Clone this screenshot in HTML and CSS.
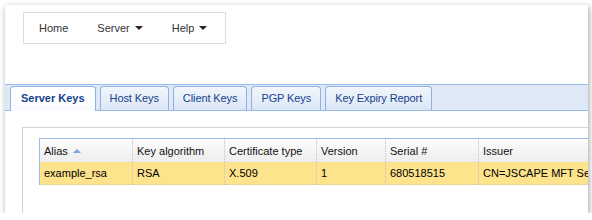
FILE: index.html
```html
<!DOCTYPE html>
<html>
<head>
<meta charset="utf-8">
<link rel="stylesheet" href="styles.css">
</head>
<body>
<div class="window">
  <div class="menu-wrap">
    <nav class="menu">
      <span class="menu-item">Home</span>
      <span class="menu-item">Server<i class="caret"></i></span>
      <span class="menu-item">Help<i class="caret"></i></span>
    </nav>
  </div>
  <div class="tabstrip">
    <span class="tab active">Server Keys</span>
    <span class="tab">Host Keys</span>
    <span class="tab">Client Keys</span>
    <span class="tab">PGP Keys</span>
    <span class="tab">Key Expiry Report</span>
  </div>
  <div class="panel">
    <div class="grid">
      <div class="hcell">Alias<i class="sort"></i></div>
      <div class="hcell">Key algorithm</div>
      <div class="hcell">Certificate type</div>
      <div class="hcell">Version</div>
      <div class="hcell">Serial #</div>
      <div class="hcell last">Issuer</div>
      <div class="cell">example_rsa</div>
      <div class="cell">RSA</div>
      <div class="cell">X.509</div>
      <div class="cell">1</div>
      <div class="cell">680518515</div>
      <div class="cell last">CN=JSCAPE MFT Server</div>
    </div>
  </div>
</div>
</body>
</html>
```

FILE: styles.css
```css
html, body {
  margin: 0;
  padding: 0;
  background: #ffffff;
}
body {
  font-family: "Liberation Sans", Arial, sans-serif;
  font-size: 11px;
  color: #000;
}
.window {
  margin: 5px 0 0 5px;
  width: 583px;
  height: 208px;
  background: #fff;
  box-shadow: 1px 2px 6px rgba(0, 0, 0, 0.38);
  overflow: hidden;
}
.menu-wrap {
  padding: 7px 0 0 18px;
}
.menu {
  display: flex;
  align-items: center;
  box-sizing: border-box;
  width: 203px;
  height: 32px;
  border: 1px solid #dcdcdc;
  padding-left: 15px;
  gap: 29px;
  color: #333;
  font-size: 11px;
}
.menu-item {
  display: inline-flex;
  align-items: center;
}
.caret {
  display: inline-block;
  width: 0;
  height: 0;
  margin-left: 5px;
  border-top: 4px solid #222;
  border-left: 4px solid transparent;
  border-right: 4px solid transparent;
}
.tabstrip {
  margin-top: 40px;
  display: flex;
  align-items: flex-end;
  gap: 4px;
  padding: 1px 0 0 5px;
  border-top: 1px solid #99bbe8;
  border-bottom: 1px solid #99bbe8;
  background: #dfe8f6;
}
.tab {
  height: 23px;
  line-height: 23px;
  padding: 0 9px;
  border: 1px solid #8db2e3;
  border-bottom: none;
  border-radius: 4px 4px 0 0;
  background: linear-gradient(#f2f6fc, #dbe6f5);
  color: #15428b;
  white-space: nowrap;
  letter-spacing: -0.1px;
}
.tab.active {
  height: 24px;
  margin-bottom: -1px;
  padding: 0 10px;
  font-weight: bold;
  letter-spacing: 0;
  background: linear-gradient(#ffffff, #ffffff 60%, #f7f9fd);
}
.panel {
  margin: 16px 0 0 17px;
  padding: 10px 0 0 16px;
  border-top: 1px solid #d4d4d4;
  border-left: 1px solid #d4d4d4;
  height: 200px;
}
.grid {
  display: grid;
  grid-template-columns: 93px 92px 92px 69px 93px 200px;
  border-top: 1px solid #99bbe8;
  border-left: 1px solid #99bbe8;
  width: 700px;
}
.hcell, .cell {
  box-sizing: border-box;
  padding: 0 4px;
  border-right: 1px dotted #c4c4c4;
  white-space: nowrap;
  overflow: hidden;
  display: flex;
  align-items: center;
}
.hcell {
  height: 23px;
  background: linear-gradient(#fdfdfd, #ededed);
  color: #111;
}
.cell {
  height: 23px;
  background: #fde38c;
  border-bottom: 1px dotted #cfc7a8;
}
.last {
  border-right: none;
}
.sort {
  display: inline-block;
  width: 0;
  height: 0;
  margin-left: 5px;
  border-bottom: 4px solid #7ea6d9;
  border-left: 4px solid transparent;
  border-right: 4px solid transparent;
}
```
